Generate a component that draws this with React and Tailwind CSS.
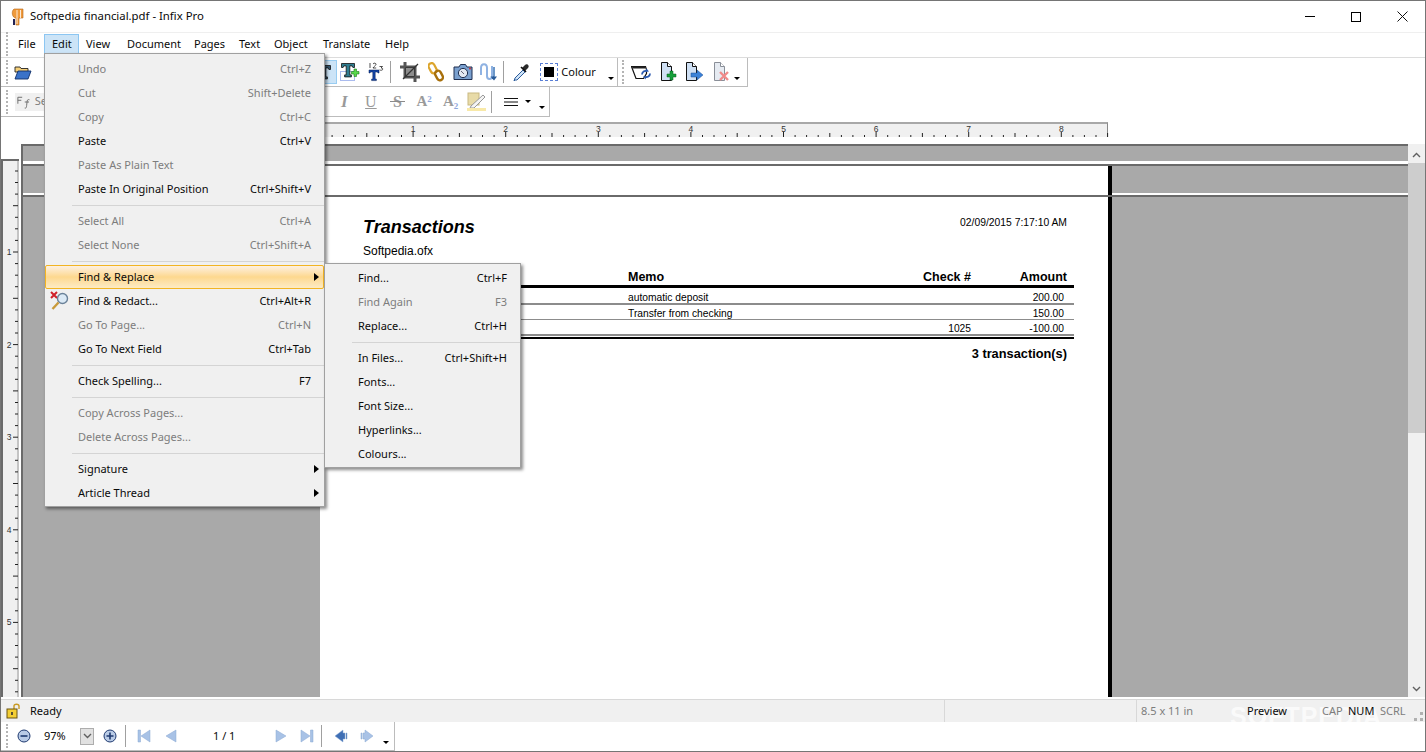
import React from "react";

const editMenu = [
  { label: "Undo", key: "Ctrl+Z", off: true },
  { label: "Cut", key: "Shift+Delete", off: true },
  { label: "Copy", key: "Ctrl+C", off: true },
  { label: "Paste", key: "Ctrl+V" },
  { label: "Paste As Plain Text", off: true },
  { label: "Paste In Original Position", key: "Ctrl+Shift+V" },
  { sep: true },
  { label: "Select All", key: "Ctrl+A", off: true },
  { label: "Select None", key: "Ctrl+Shift+A", off: true },
  { sep: true },
  { label: "Find & Replace", sub: true, hot: true },
  { label: "Find & Redact...", key: "Ctrl+Alt+R", redact: true },
  { label: "Go To Page...", key: "Ctrl+N", off: true },
  { label: "Go To Next Field", key: "Ctrl+Tab" },
  { sep: true },
  { label: "Check Spelling...", key: "F7" },
  { sep: true },
  { label: "Copy Across Pages...", off: true },
  { label: "Delete Across Pages...", off: true },
  { sep: true },
  { label: "Signature", sub: true },
  { label: "Article Thread", sub: true },
];

const findMenu = [
  { label: "Find...", key: "Ctrl+F" },
  { label: "Find Again", key: "F3", off: true },
  { label: "Replace...", key: "Ctrl+H" },
  { sep: true },
  { label: "In Files...", key: "Ctrl+Shift+H" },
  { label: "Fonts..." },
  { label: "Font Size..." },
  { label: "Hyperlinks..." },
  { label: "Colours..." },
];

const menuBar = [
  { label: "File", w: "w-[33px]" },
  { label: "Edit", w: "w-[35px] h-[21px] bg-[#cce4f7] border border-[#8cc6f2] pl-[6px]" },
  { label: "View", w: "w-[41px]" },
  { label: "Document", w: "w-[67px]" },
  { label: "Pages", w: "w-[45px]" },
  { label: "Text", w: "w-[35px]" },
  { label: "Object", w: "w-[49px]" },
  { label: "Translate", w: "w-[62px]" },
  { label: "Help", w: "w-[40px]" },
];

function RedactIcon() {
  return (
    <svg width="20" height="20" viewBox="0 0 20 20" className="absolute left-[4px] top-[1px]">
      <path d="M1 1l6 6M7 1L1 7" stroke="#d0202a" strokeWidth="2" />
      <circle cx="12.5" cy="7.5" r="5" fill="#dbe9f5" stroke="#6b8299" strokeWidth="1.4" />
      <path d="M8.5 11.5L2.5 18" stroke="#c99a3a" strokeWidth="2.4" />
    </svg>
  );
}

function MenuRows({ items, textLeft, keyRight }) {
  return items.map((it, i) => {
    if (it.sep) {
      return (
        <div key={i} className="h-[8px] flex items-center" style={{ paddingLeft: textLeft - 6 }}>
          <div className="h-px w-full bg-[#d4d4d4]" />
        </div>
      );
    }
    return (
      <div
        key={i}
        className={
          "relative h-[24px] flex items-center justify-between border " +
          (it.hot
            ? "border-[#f2b422] rounded-[2px] bg-gradient-to-b from-[#fdf0e0] via-[#fdd88e] to-[#fdebc4] "
            : "border-transparent ") +
          (it.off ? "text-[#7d7d7d]" : "text-[#0a0a0a]")
        }
        style={{ paddingLeft: textLeft - 1, paddingRight: keyRight - 1 }}
      >
        {it.redact && <RedactIcon />}
        <span>{it.label}</span>
        {it.key && <span>{it.key}</span>}
        {it.sub && <span className="absolute right-[4px] top-[7px] w-0 h-0 border-y-[4px] border-y-transparent border-l-[5px] border-l-black" />}
      </div>
    );
  });
}

function Grip() {
  return <div className="w-[3px] h-[24px] border-l-2 border-dotted border-[#b4b4b4] shrink-0" />;
}

function Sep() {
  return <div className="w-px h-[22px] bg-[#a0a0a0] shrink-0" />;
}

function Drop() {
  return <span className="block w-0 h-0 border-x-[3px] border-x-transparent border-t-[3px] border-t-black" />;
}

function Btn({ children, className = "" }) {
  return <div className={"w-[26.6px] h-[24px] flex items-center justify-center shrink-0 " + className}>{children}</div>;
}

const Folder = () => (
  <svg width="18" height="16" viewBox="0 0 18 16">
    <path d="M1 3h5l1 1.5h7V8H1z" fill="#f5cf78" stroke="#222" strokeWidth=".9" />
    <path d="M4 7h13l-3 8H1z" fill="#3a72c8" stroke="#10306a" strokeWidth=".9" />
  </svg>
);

const BigT = ({ fill = "#35566e", stroke = "#111" }) => (
  <path d="M1.5 1.5h13v4h-1.6l-.8-1.6H9.8v9h1.6v2H4.6v-2h1.6v-9H3.9l-.8 1.6H1.5z" fill={fill} stroke={stroke} strokeWidth=".8" />
);

const TPlus = () => (
  <svg width="20" height="20" viewBox="0 0 20 20">
    <rect x=".5" y="9.5" width="14" height="9" fill="none" stroke="#5577dd" strokeDasharray="1 1" />
    <BigT fill="#2f7d90" />
    <path d="M13.5 8.5h2.5V6h2.5v2.5H21V11h-2.5v2.5H16V11h-2.5z" transform="translate(-2 1)" fill="#58d84a" stroke="#1c7a1c" strokeWidth=".6" />
  </svg>
);

const T123 = () => (
  <svg width="20" height="20" viewBox="0 0 20 20">
    <path d="M2 8h10v3h-1l-.6-1H8.2v7h1.2v1.6H4.6V17h1.2v-7H3.6L3 11H2z" fill="#1546a8" stroke="#071f55" strokeWidth=".5" />
    <path d="M3 1v5M6 2c1-1.4 3-1 3 .4 0 1-2.4 2.2-3 3.6h3.2M12.5 4.5h3l-1.5 1.4c1.5 0 2 .7 1.6 1.7-.4.8-2 .9-3 .2" fill="none" stroke="#222" strokeWidth=".8" />
  </svg>
);

const Crop = () => (
  <svg width="20" height="20" viewBox="0 0 20 20">
    <path d="M5 0v15h15M0 5h15v15" fill="none" stroke="#555" strokeWidth="3" />
    <path d="M5.5 5.5h9v9h-9z" fill="#8d8d8d" stroke="#3a3a3a" />
    <path d="M3 17L18 2" stroke="#333" strokeWidth="1.2" />
  </svg>
);

const Chain = () => (
  <svg width="16" height="20" viewBox="0 0 16 20">
    <rect x="1.5" y="1" width="6" height="10.5" rx="3" transform="rotate(-28 4.5 6)" fill="none" stroke="#dca52c" strokeWidth="2.2" />
    <rect x="8" y="8.5" width="6" height="10" rx="3" transform="rotate(-28 11 13.5)" fill="none" stroke="#a8700c" strokeWidth="2.4" />
  </svg>
);

const Camera = () => (
  <svg width="20" height="18" viewBox="0 0 20 18">
    <path d="M1 4h5l1.5-2.5h5L14 4h5v12.5H1z" fill="#7aa0cf" stroke="#1f2f50" />
    <circle cx="10" cy="10" r="4.6" fill="#e3e9f2" stroke="#1f2f50" />
    <path d="M8 8l3 3" stroke="#667" />
    <circle cx="17" cy="5.5" r="1" fill="#d03030" />
  </svg>
);

const Loop = () => (
  <svg width="20" height="20" viewBox="0 0 20 20">
    <path d="M2 13V6c0-5 6-5 6 0v8c0 4 5 4 5 0V4" fill="none" stroke="#8fb2e2" strokeWidth="2" />
    <path d="M15 5v9l-1.5 3" fill="none" stroke="#2e6bb0" strokeWidth="1.4" />
    <path d="M11.5 14.5L15 18.5l3-4z" fill="#285a98" />
  </svg>
);

const Dropper = () => (
  <svg width="18" height="20" viewBox="0 0 18 20">
    <path d="M2 18l-1 1 1-3 8-8 2 2-8 8z" fill="#cfe3f7" stroke="#2c5d9c" />
    <path d="M9 6l3 3 3-3c2-2-1-5-3-3z" fill="#2a2a2a" />
    <path d="M8 5l5 5" stroke="#111" strokeWidth="1.6" />
  </svg>
);

const NoteRefresh = () => (
  <svg width="20" height="18" viewBox="0 0 20 18">
    <path d="M.5 3.5h14l1 3v4l-3 5H5z" fill="#fff" stroke="#111" strokeWidth="1.2" />
    <path d="M.5 3.5h14v2H2z" fill="#222" />
    <path d="M11 11.5c0-2.6 2.6-4.4 5-3.4M19 10.5c0 2.6-2.6 4.4-5 3.4" fill="none" stroke="#2c5ab0" strokeWidth="1.8" />
    <path d="M15.5 5.5l2.5 3-3.6.4zM14.5 16.5l-2.5-3 3.6-.4z" fill="#2c5ab0" />
  </svg>
);

const DocBase = ({ dim }) => (
  <>
    <path d="M2.5 .5h6l4 4v14h-10z" fill={dim ? "#e6ebf2" : "#cfe0f4"} stroke={dim ? "#8a8f98" : "#111"} />
    <path d="M8.5 .5v4h4" fill="#fff" stroke={dim ? "#8a8f98" : "#111"} />
  </>
);

const DocAdd = () => (
  <svg width="18" height="20" viewBox="0 0 18 20">
    <DocBase />
    <path d="M8 12h3V9h3v3h3v3h-3v3h-3v-3H8z" fill="#16a03a" stroke="#0b5f1c" strokeWidth=".5" />
  </svg>
);

const DocGo = () => (
  <svg width="20" height="20" viewBox="0 0 20 20">
    <DocBase />
    <path d="M7 11h6V8l6 5-6 5v-3H7z" fill="#3b82d8" stroke="#1b4d96" strokeWidth=".5" />
  </svg>
);

const DocDel = () => (
  <svg width="18" height="20" viewBox="0 0 18 20">
    <DocBase dim />
    <path d="M8 10l8 8M16 10l-8 8" stroke="#f08a8a" strokeWidth="2.4" />
  </svg>
);

const FontLetters = () => (
  <svg width="16" height="16" viewBox="0 0 16 16" fill="none" stroke="#6a6a6a" strokeWidth="1.1">
    <path d="M1 10V2.5h5M1 6h4M9 15c2 .5 2-1 2.2-3l.6-5c.3-2 1.4-2 2.7-1.600M9 8h5" />
  </svg>
);

const Glyph = ({ children, className = "" }) => (
  <span className={"relative font-['Liberation_Serif',serif] text-[#9a9a9a] " + className}>{children}</span>
);

const Highlighter = () => (
  <svg width="20" height="20" viewBox="0 0 20 20">
    <rect x="1" y="1" width="11" height="12" fill="#e8dba8" stroke="#c9b981" />
    <path d="M4 14L16 3l2 2L7 16H3z" fill="#f4f4f4" stroke="#999" />
    <rect x="0" y="16" width="19" height="3" fill="#f8e9a8" />
  </svg>
);

const Lines = () => (
  <svg width="16" height="10" viewBox="0 0 16 10">
    <path d="M1 1.5h14M1 5h14M1 8.5h14" stroke="#111" />
  </svg>
);

function Circle({ plus }) {
  return (
    <svg width="14" height="14" viewBox="0 0 14 14">
      <circle cx="7" cy="7" r="6" fill="#b9cbe6" stroke="#1f3a70" />
      <path d={plus ? "M3.5 7h7M7 3.5v7" : "M3.5 7h7"} stroke="#1f3a70" strokeWidth="1.6" />
    </svg>
  );
}

function Nav({ d, fill = "#a8c2e6" }) {
  return (
    <svg width="14" height="14" viewBox="0 0 14 14">
      <path d={d} fill={fill} stroke="#8aa8d2" strokeWidth=".5" />
    </svg>
  );
}

const Lock = () => (
  <svg width="16" height="16" viewBox="0 0 16 16" className="relative ml-[5px]">
    <path d="M8 6V3c0-2.4 5-2.4 5 0v3" fill="none" stroke="#c99a22" strokeWidth="1.4" />
    <rect x="1" y="6" width="10" height="9" fill="#f4cf35" stroke="#6b5510" />
    <path d="M6 9v3" stroke="#333" strokeWidth="1.6" />
  </svg>
);

function HRuler() {
  const ticks = [];
  for (let i = 0; i <= 68; i++) {
    const x = 0.5 + i * 11.575;
    const h = i % 8 === 0 ? 5 : i % 4 === 0 ? 4 : 2;
    ticks.push(<path key={i} d={`M${x.toFixed(1)} 15V${15 - h}`} stroke="#222" />);
  }
  return (
    <svg width="790" height="22" viewBox="0 0 790 22" className="absolute left-[319px] top-0">
      {ticks}
      {[1, 2, 3, 4, 5, 6, 7, 8].map((n) => (
        <text key={n} x={0.5 + n * 92.6} y="10" textAnchor="middle" fontSize="8.5" fill="#333" fontFamily="Liberation Sans">
          {n}
        </text>
      ))}
    </svg>
  );
}

function VRuler() {
  const ticks = [];
  for (let i = 1; i <= 46; i++) {
    const y = i * 11.575 - 1.6;
    const w = i % 4 === 0 ? 5 : 3;
    ticks.push(<path key={i} d={`M15 ${y.toFixed(1)}H${15 - w}`} stroke="#222" />);
  }
  return (
    <svg width="18" height="540" viewBox="0 0 18 540" className="absolute left-0 top-0">
      {ticks}
      {[1, 2, 3, 4, 5].map((n) => (
        <text key={n} x="6" y={n * 92.6 + 1.4} textAnchor="middle" fontSize="8.5" fill="#333" fontFamily="Liberation Sans">
          {n}
        </text>
      ))}
    </svg>
  );
}

function Arrow({ up }) {
  return (
    <svg width="9" height="6" viewBox="0 0 9 6">
      <path d={up ? "M1 5l3.5-3.5L8 5" : "M1 1l3.5 3.5L8 1"} fill="none" stroke="#606060" strokeWidth="1.4" />
    </svg>
  );
}

const rows = [
  { memo: "automatic deposit", amount: "200.00", rule: "h-[2px] bg-[#8c8c8c]", h: "h-[15px]" },
  { memo: "Transfer from checking", amount: "150.00", rule: "h-px bg-[#8c8c8c]", h: "h-[14px]" },
  { memo: "", check: "1025", amount: "-100.00", rule: "h-[2px] bg-[#8c8c8c]", h: "h-[14px]" },
];

export default function App() {
  return (
    <div className="relative w-[1426px] h-[752px] overflow-hidden bg-white border border-[#757575] flex flex-col font-['Noto_Sans',sans-serif] text-[11px] text-[#0a0a0a]">
      {/* title bar */}
      <div className="h-[31px] shrink-0 flex items-center pl-[10px]">
        <svg width="14" height="18" viewBox="0 0 14 18">
          <path d="M3 1h9v9H8v7H5v-7C1 10 0 3 3 1z" fill="#ef9a3c" stroke="#b56716" strokeWidth=".6" />
          <path d="M6 2v14M9.5 2v8" stroke="#fff" strokeWidth=".8" />
          <rect x="2" y="11" width="2" height="6" fill="#225" />
        </svg>
        <span className="ml-[5px] -mt-[2px] text-[11.35px]">Softpedia financial.pdf - Infix Pro</span>
        <div className="ml-auto flex items-center">
          <div className="w-[46px] flex justify-center"><div className="w-[10px] h-px bg-black" /></div>
          <div className="w-[46px] flex justify-center"><div className="w-[10px] h-[10px] border border-black" /></div>
          <div className="w-[46px] flex justify-center">
            <svg width="11" height="11" viewBox="0 0 11 11"><path d="M.5.5l10 10M10.5.5l-10 10" stroke="#111" /></svg>
          </div>
        </div>
      </div>

      {/* menu bar */}
      <div className="h-[25px] shrink-0 flex items-center border-t border-[#efefef] pl-[5px] pb-[2px]">
        <Grip />
        <div className="ml-[2px] flex items-center">
          {menuBar.map((m) => (
            <span key={m.label} className={"pl-[7px] flex items-center shrink-0 " + m.w}>{m.label}</span>
          ))}
        </div>
      </div>

      {/* toolbars */}
      <div className="h-[30px] shrink-0 flex items-start border-t border-[#dcdcdc]">
        <div className="flex items-center h-full border-b border-[#bcbcbc] pl-[5px]">
          <div className="w-[612px] h-full flex items-center border-r border-[#bcbcbc]">
            <Grip />
            <Btn className="ml-px"><Folder /></Btn>
            <Btn className="ml-[274px] bg-[#cce4f7] border border-[#99cdf2]">
              <svg width="16" height="17" viewBox="0 0 16 17"><BigT /></svg>
            </Btn>
            <Btn><TPlus /></Btn>
            <Btn><T123 /></Btn>
            <Sep />
            <Btn className="ml-[5px]"><Crop /></Btn>
            <Btn><Chain /></Btn>
            <Btn><Camera /></Btn>
            <Btn><Loop /></Btn>
            <Sep />
            <Btn className="ml-[5px]"><Dropper /></Btn>
            <div className="ml-[5px] w-[18px] h-[18px] border border-dashed border-[#5a7fd6] flex items-center justify-center shrink-0">
              <div className="w-[10px] h-[10px] bg-black" />
            </div>
            <span className="ml-[3px]">Colour</span>
            <div className="ml-[12px] mt-[13px]"><Drop /></div>
          </div>
          <div className="w-[130px] h-full flex items-center border-r border-[#bcbcbc]">
            <div className="ml-[4px]"><Grip /></div>
            <Btn className="ml-[3px]"><NoteRefresh /></Btn>
            <Btn><DocAdd /></Btn>
            <Btn><DocGo /></Btn>
            <Btn><DocDel /></Btn>
            <div className="mt-[13px]"><Drop /></div>
          </div>
        </div>
      </div>
      <div className="h-[30px] shrink-0 flex items-center">
        <div className="flex items-center h-full w-[549px] shrink-0 pl-[5px] border-b border-r border-[#bcbcbc]">
          <Grip />
          <div className="ml-[6px] w-[32px] h-[18px] bg-[#f0f0f0] flex items-center pl-[2px]">
            <FontLetters />
            <span className="ml-[4px] text-[#7d7d7d]">Se</span>
          </div>
          <Btn className="ml-[284px]"><Glyph className="italic font-bold text-[17px]">I</Glyph></Btn>
          <Btn><Glyph className="underline text-[16px]">U</Glyph></Btn>
          <Btn>
            <Glyph className="text-[16px] font-bold">
              S
              <span className="absolute left-[-3px] right-[-3px] top-[11px] h-px bg-[#8a8a8a]" />
            </Glyph>
          </Btn>
          <Btn><Glyph className="font-bold text-[15px]">A<sup className="text-[9px] text-[#8fa8dc]">2</sup></Glyph></Btn>
          <Btn><Glyph className="font-bold text-[15px]">A<sub className="text-[9px] text-[#8fa8dc]">2</sub></Glyph></Btn>
          <Btn className="w-[21px]"><Highlighter /></Btn>
          <Sep />
          <div className="ml-[11px]"><Lines /></div>
          <div className="ml-[6px] -mt-px"><Drop /></div>
          <div className="ml-[8px] mt-[12px]"><Drop /></div>
        </div>
      </div>

      {/* horizontal ruler */}
      <div className="h-[5px] shrink-0" />
      <div className="relative h-[22px] shrink-0">
        <div className="absolute left-[319px] top-0 w-[788px] h-[15px] bg-[#f0f0f0] border-t-2 border-[#a8a8a8] border-r border-r-[#888]" />
        <HRuler />
      </div>

      {/* document area */}
      <div className="flex-1 min-h-0 flex">
        <div className="w-[20px] shrink-0 flex flex-col">
          <div className="h-[15px] shrink-0" />
          <div className="relative flex-1 border-l-2 border-t-2 border-[#6a6a6a] bg-[#f0f0f0] mr-[2px]">
            <div className="absolute top-0 right-0 bottom-0 w-[2px] bg-[#c4c4c4]" />
            <VRuler />
          </div>
        </div>
        <div className="flex-1 min-w-0 flex flex-col bg-[#a9a9a9] border-l-2 border-t-2 border-[#6a6a6a]">
          <div className="h-[15px] shrink-0" />
          <div className="h-[5px] shrink-0 border-t-[3px] border-white border-b-2 border-b-[#6a6a6a]" />
          <div className="h-[29px] shrink-0 flex">
            <div className="w-[297px] shrink-0 border-b-2 border-white" />
            <div className="w-[788px] shrink-0 bg-white" />
            <div className="w-[4px] shrink-0 bg-black" />
            <div className="flex-1 border-b-2 border-white" />
          </div>
          <div className="h-[2px] shrink-0 bg-[#6a6a6a]" />
          <div className="flex-1 min-h-0 flex">
            <div className="w-[297px] shrink-0" />
            <div className="w-[788px] shrink-0 bg-white pt-[18px] pl-[43px] font-['Liberation_Sans',sans-serif] text-black">
              <div className="w-[704px] h-[24px] flex justify-between items-center">
                <span className="text-[18px] font-bold italic">Transactions</span>
                <span className="text-[10.35px] -mt-[8px]">02/09/2015 7:17:10 AM</span>
              </div>
              <div className="h-[24px] flex items-center text-[12px]">Softpedia.ofx</div>
              <div className="w-[704px] h-[22px] grid grid-cols-[265px_220px_123px_96px] items-end text-[12.5px] leading-[15px] font-bold">
                <span />
                <span>Memo</span>
                <span className="text-right">Check #</span>
                <span className="text-right">Amount</span>
              </div>
              <div className="w-[711px] h-[3px] bg-black" />
              {rows.map((r) => (
                <div key={r.amount}>
                  <div className={"w-[704px] grid grid-cols-[265px_220px_123px_96px] items-end text-[10.25px] leading-[10px] " + r.h}>
                    <span />
                    <span>{r.memo}</span>
                    <span className="text-right">{r.check}</span>
                    <span className="text-right pr-[3px]">{r.amount}</span>
                  </div>
                  <div className={"w-[711px] " + r.rule} />
                </div>
              ))}
              <div className="w-[711px] h-[2px] mt-[1px] bg-black" />
              <div className="w-[704px] mt-[5px] text-right text-[12.8px] font-bold">3 transaction(s)</div>
            </div>
            <div className="w-[4px] shrink-0 bg-black" />
            <div className="flex-1" />
          </div>
        </div>
        <div className="w-[17px] shrink-0 bg-[#f0f0f0] flex flex-col pt-[2px]">
          <div className="h-[17px] flex items-center justify-center"><Arrow up /></div>
          <div className="h-[270px] bg-[#cdcdcd]" />
          <div className="flex-1" />
          <div className="h-[17px] flex items-center justify-center"><Arrow /></div>
        </div>
      </div>

      {/* status bar */}
      <div className="h-[3px] shrink-0 bg-white border-b border-[#d8d8d8]" />
      <div className="relative h-[22px] shrink-0 flex items-center bg-[#f0f0f0]">
        <div className="absolute left-[1229px] top-[4px] leading-none text-[25px] font-bold tracking-[1px] text-white opacity-70 font-['Liberation_Sans',sans-serif]">SOFTPEDIA</div>
        <Lock />
        <span className="relative ml-[8px] w-[914px]">Ready</span>
        <div className="w-[192px] h-full border-l border-[#d8d8d8]" />
        <div className="relative w-[105px] h-full border-l border-[#d8d8d8] pl-[4px] flex items-center text-[#7d7d7d]">8.5 x 11 in</div>
        <div className="relative w-[78px] pl-[6px]">Preview</div>
        <div className="relative w-[27px] pl-[3px] text-[#7d7d7d]">CAP</div>
        <div className="relative w-[32px] pl-[2px]">NUM</div>
        <div className="relative w-[30px] pl-[2px] text-[#7d7d7d]">SCRL</div>
        <div className="relative ml-auto mr-[2px] self-end mb-[1px] w-[9px] h-[9px] border-r-[3px] border-b-[3px] border-dotted border-[#b0b0b0]" />
      </div>

      {/* bottom toolbar */}
      <div className="h-[29px] shrink-0 flex items-center pl-[5px] w-[394px] border-r border-b border-[#bcbcbc]">
        <Grip />
        <div className="ml-[8px]"><Circle /></div>
        <span className="ml-[13px] w-[36px]">97%</span>
        <div className="w-[14px] h-[17px] bg-[#e1e1e1] border border-[#adadad] flex items-center justify-center shrink-0"><Arrow /></div>
        <div className="ml-[9px]"><Circle plus /></div>
        <div className="ml-[8px]"><Sep /></div>
        <div className="ml-[11px]"><Nav d="M1 1h2.5v12H1zM13 1v12L4 7z" /></div>
        <div className="ml-[13px]"><Nav d="M12 1v12L2 7z" /></div>
        <span className="ml-[35px] w-[61px]">1 / 1</span>
        <div><Nav d="M2 1v12l10-6z" /></div>
        <div className="ml-[12px]"><Nav d="M1 1v12l9-6zM10.5 1H13v12h-2.5z" /></div>
        <div className="ml-[7px]"><Sep /></div>
        <div className="ml-[12px]"><Nav d="M9 1v3h2v6H9v3L1 7zM12 4h1v6h-1z" fill="#3f6fb5" /></div>
        <div className="ml-[12px]"><Nav d="M5 1v3H3v6h2v3l8-6zM2 4H1v6h1z" /></div>
        <div className="ml-[9px] mt-[12px]"><Drop /></div>
      </div>

      {/* open menus */}
      <div className="absolute left-[43px] top-[52px] w-[281px] h-[454px] bg-[#f0f0f0] border border-[#a0a0a0] pt-[3px] shadow-[2px_2px_3px_rgba(0,0,0,0.45)]">
        <MenuRows items={editMenu} textLeft={33} keyRight={13} />
      </div>
      <div className="absolute left-[323px] top-[262px] w-[197px] h-[205px] bg-[#f0f0f0] border border-[#a0a0a0] pt-[2px] shadow-[2px_2px_3px_rgba(0,0,0,0.45)]">
        <MenuRows items={findMenu} textLeft={33} keyRight={13} />
      </div>
    </div>
  );
}
